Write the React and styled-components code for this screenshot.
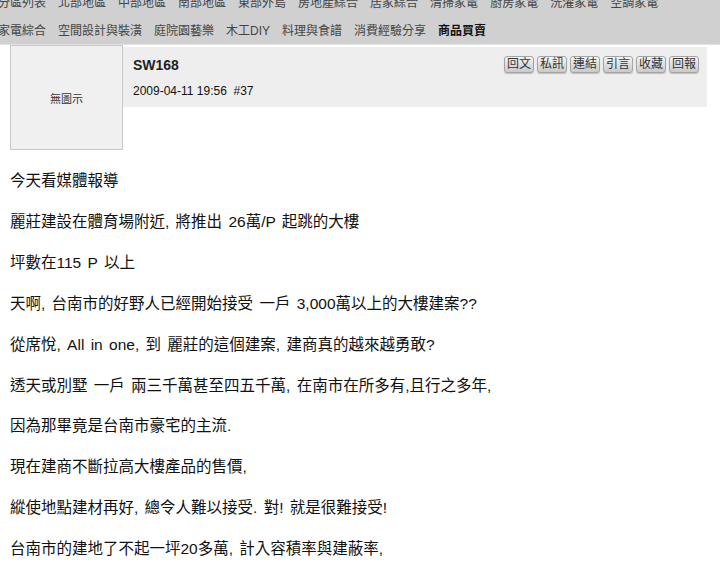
import React from "react"
import styled, { createGlobalStyle } from "styled-components"

const GlobalStyle = createGlobalStyle`
    html, body {
        margin: 0;
        padding: 0;
        background: #fff;
    }
    body {
        font-family: "Liberation Sans", "Noto Sans CJK TC", sans-serif;
        color: #000;
    }
`

const cjk = `"Liberation Sans", "Noto Sans CJK TC", sans-serif`

const Nav = styled.div`
    height: 44px;
    overflow: hidden;
    background-color: #d0d0d0;
    border-bottom: 1px solid #e2e2e2;
    display: flex;
    flex-direction: column;
    justify-content: flex-end;
    gap: 2px;
`
const NavRow = styled.div`
    display: flex;
    align-items: center;
    gap: 12px;
    height: 26px;
    flex-shrink: 0;
    margin-left: -2px;
    white-space: nowrap;
`
const NavLink = styled.a`
    font-family: ${cjk};
    font-size: 12px;
    line-height: 26px;
    color: ${p => p.active ? "#111" : "#444"};
    font-weight: ${p => p.active ? 700 : 400};
    text-decoration: none;
    cursor: pointer;
`

const PostHead = styled.div`
    display: flex;
    align-items: flex-start;
    padding-left: 10px;
    width: 697px;
`
const Avatar = styled.div`
    width: 111px;
    height: 103px;
    border: 1px solid #c9c9c9;
    background-color: #f0f0f0;
    display: flex;
    align-items: center;
    justify-content: center;
    font-family: ${cjk};
    font-size: 11px;
    color: #333;
    flex-shrink: 0;
`
const Meta = styled.div`
    flex: 1;
    height: 60px;
    margin-top: 2px;
    background-color: #eeeeee;
    display: flex;
    justify-content: space-between;
    align-items: flex-start;
    padding: 0 8px 0 10px;
`
const Who = styled.div`
    display: flex;
    flex-direction: column;
`
const Author = styled.div`
    font-size: 14px;
    font-weight: 700;
    color: #222;
    line-height: 18px;
    margin-top: 9px;
`
const Stamp = styled.div`
    font-size: 12px;
    color: #111;
    line-height: 16px;
    margin-top: 9px;
    white-space: pre;
`
const Tools = styled.div`
    display: flex;
    gap: 3px;
    margin-top: 9px;
`
const ToolButton = styled.button`
    width: 30px;
    height: 17px;
    padding: 0;
    border: 1px solid #a4a4a4;
    border-radius: 3px;
    background: linear-gradient(#f4f4f4, #c9c9c9);
    box-shadow: 0 1px 1px rgba(0,0,0,.2);
    font-family: ${cjk};
    font-size: 12px;
    line-height: 15px;
    color: #333;
    cursor: pointer;
    outline: none;
    &:hover{
        background: linear-gradient(#fff, #ddd);
    }
`

const Body = styled.div`
    padding: 11px 0 0 10px;
`
const Line = styled.div`
    font-family: ${cjk};
    font-size: 15.5px;
    line-height: 40.9px;
    word-spacing: 2px;
    color: #111;
    white-space: pre;
`

const navTop = ["分區列表","北部地區","中部地區","南部地區","東部外島","房地產綜合","居家綜合","清掃家電","廚房家電","洗濯家電","空調家電"]
const navBottom = ["家電綜合","空間設計與裝潢","庭院園藝樂","木工DIY","料理與食譜","消費經驗分享","商品買賣"]
const tools = ["回文","私訊","連結","引言","收藏","回報"]
const lines = [
    "今天看媒體報導",
    "麗莊建設在體育場附近, 將推出 26萬/P 起跳的大樓",
    "坪數在115 P 以上",
    "天啊, 台南市的好野人已經開始接受 一戶 3,000萬以上的大樓建案??",
    "從席悅, All in one, 到 麗莊的這個建案, 建商真的越來越勇敢?",
    "透天或別墅 一戶 兩三千萬甚至四五千萬, 在南市在所多有,且行之多年,",
    "因為那畢竟是台南市豪宅的主流.",
    "現在建商不斷拉高大樓產品的售價,",
    "縱使地點建材再好, 總令人難以接受. 對! 就是很難接受!",
    "台南市的建地了不起一坪20多萬, 計入容積率與建蔽率,",
]

export default function App(){
    return(
        <>
            <GlobalStyle />
            <Nav>
                <NavRow>
                    {navTop.map(n => <NavLink key={n}>{n}</NavLink>)}
                </NavRow>
                <NavRow>
                    {navBottom.map(n => <NavLink key={n} active={n == "商品買賣"}>{n}</NavLink>)}
                </NavRow>
            </Nav>
            <PostHead>
                <Avatar>無圖示</Avatar>
                <Meta>
                    <Who>
                        <Author>SW168</Author>
                        <Stamp>{"2009-04-11 19:56  #37"}</Stamp>
                    </Who>
                    <Tools>
                        {tools.map(t => <ToolButton key={t}>{t}</ToolButton>)}
                    </Tools>
                </Meta>
            </PostHead>
            <Body>
                {lines.map((l, i) => <Line key={i}>{l}</Line>)}
            </Body>
        </>
    )
}
